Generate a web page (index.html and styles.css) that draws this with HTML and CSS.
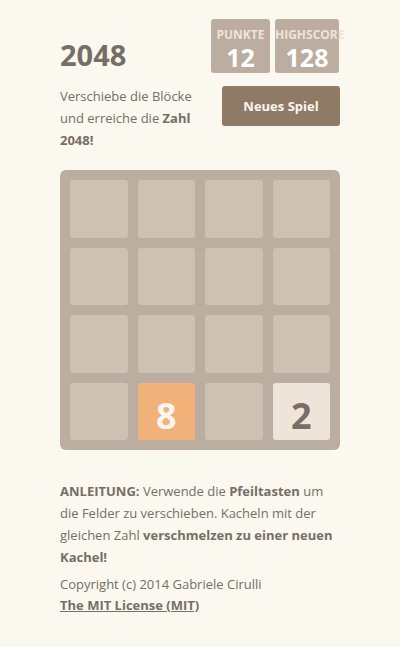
FILE: index.html
```html
<!DOCTYPE html>
<html lang="de">
<head>
<meta charset="utf-8">
<title>2048</title>
<link rel="stylesheet" href="styles.css">
</head>
<body>
<div class="container">
  <div class="heading">
    <h1 class="title">2048</h1>
    <div class="scores">
      <div class="score-box score-current">
        <div class="score-label">PUNKTE</div>
        <div class="score-value">12</div>
      </div>
      <div class="score-box score-best">
        <div class="score-label">HIGHSCORE</div>
        <div class="score-value">128</div>
      </div>
    </div>
  </div>
  <div class="above-game">
    <p class="game-intro">Verschiebe die Blöcke und erreiche die <strong>Zahl 2048!</strong></p>
    <a class="restart-button">Neues Spiel</a>
  </div>
  <div class="board">
    <div class="cell"></div><div class="cell"></div><div class="cell"></div><div class="cell"></div>
    <div class="cell"></div><div class="cell"></div><div class="cell"></div><div class="cell"></div>
    <div class="cell"></div><div class="cell"></div><div class="cell"></div><div class="cell"></div>
    <div class="cell"></div><div class="cell tile tile-8">8</div><div class="cell"></div><div class="cell tile tile-2">2</div>
  </div>
  <p class="explanation"><strong>ANLEITUNG:</strong> Verwende die <strong>Pfeiltasten</strong> um die Felder zu verschieben. Kacheln mit der gleichen Zahl <strong>verschmelzen zu einer neuen Kachel!</strong></p>
  <p class="copyright">Copyright (c) 2014 Gabriele Cirulli<br><a class="license">The MIT License (MIT)</a></p>
</div>
</body>
</html>
```

FILE: styles.css
```css
html, body {
  margin: 0;
  padding: 0;
  background: #faf8ef;
  color: #776e65;
  font-family: "Open Sans", "Noto Sans", sans-serif;
  font-size: 13px;
}

.container {
  width: 280px;
  margin: 0 auto;
  padding-top: 19px;
}

.heading {
  display: flex;
  justify-content: space-between;
  align-items: flex-start;
}

.title {
  margin: 21px 0 0 0;
  font-size: 29px;
  line-height: 30px;
  font-weight: bold;
  color: #776e65;
}

.scores {
  display: flex;
  gap: 5px;
  margin-right: 1px;
}

.score-box {
  background: #bbada0;
  border-radius: 3px;
  height: 54px;
  box-sizing: border-box;
  padding-top: 8px;
  text-align: center;
  white-space: nowrap;
}

.score-current { width: 59px; }
.score-best { width: 64px; }

.score-label {
  font-size: 12px;
  font-weight: bold;
  color: #eee4da;
  line-height: 15px;
}

.score-value {
  font-size: 25px;
  font-weight: bold;
  color: #ffffff;
  line-height: 30px;
}

.above-game {
  display: flex;
  justify-content: space-between;
  align-items: flex-start;
  margin-top: 12px;
}

.game-intro {
  margin: 0;
  width: 148px;
  line-height: 22px;
}

.restart-button {
  display: block;
  margin-top: 1px;
  width: 118px;
  height: 40px;
  line-height: 40px;
  text-align: center;
  background: #8f7a66;
  color: #f9f6f2;
  font-weight: bold;
  border-radius: 3px;
}

.board {
  margin-top: 19px;
  background: #bbada0;
  border-radius: 6px;
  padding: 10px;
  display: grid;
  grid-template-columns: repeat(4, 1fr);
  gap: 10px;
}

.cell {
  height: 57.5px;
  border-radius: 3px;
  background: #cdc1b4;
  box-sizing: border-box;
  display: flex;
  align-items: center;
  justify-content: center;
  font-size: 36px;
  font-weight: bold;
}

.tile {
  padding-top: 9px;
}

.tile-8 {
  background: #f2b179;
  color: #f9f6f2;
}

.tile-2 {
  background: #eee4da;
  color: #776e65;
}

.explanation {
  margin: 30px 0 0 0;
  line-height: 22px;
}

.copyright {
  margin: 6px 0 0 0;
  line-height: 21px;
}

.license {
  font-weight: bold;
  text-decoration: underline;
  color: #776e65;
}
```
